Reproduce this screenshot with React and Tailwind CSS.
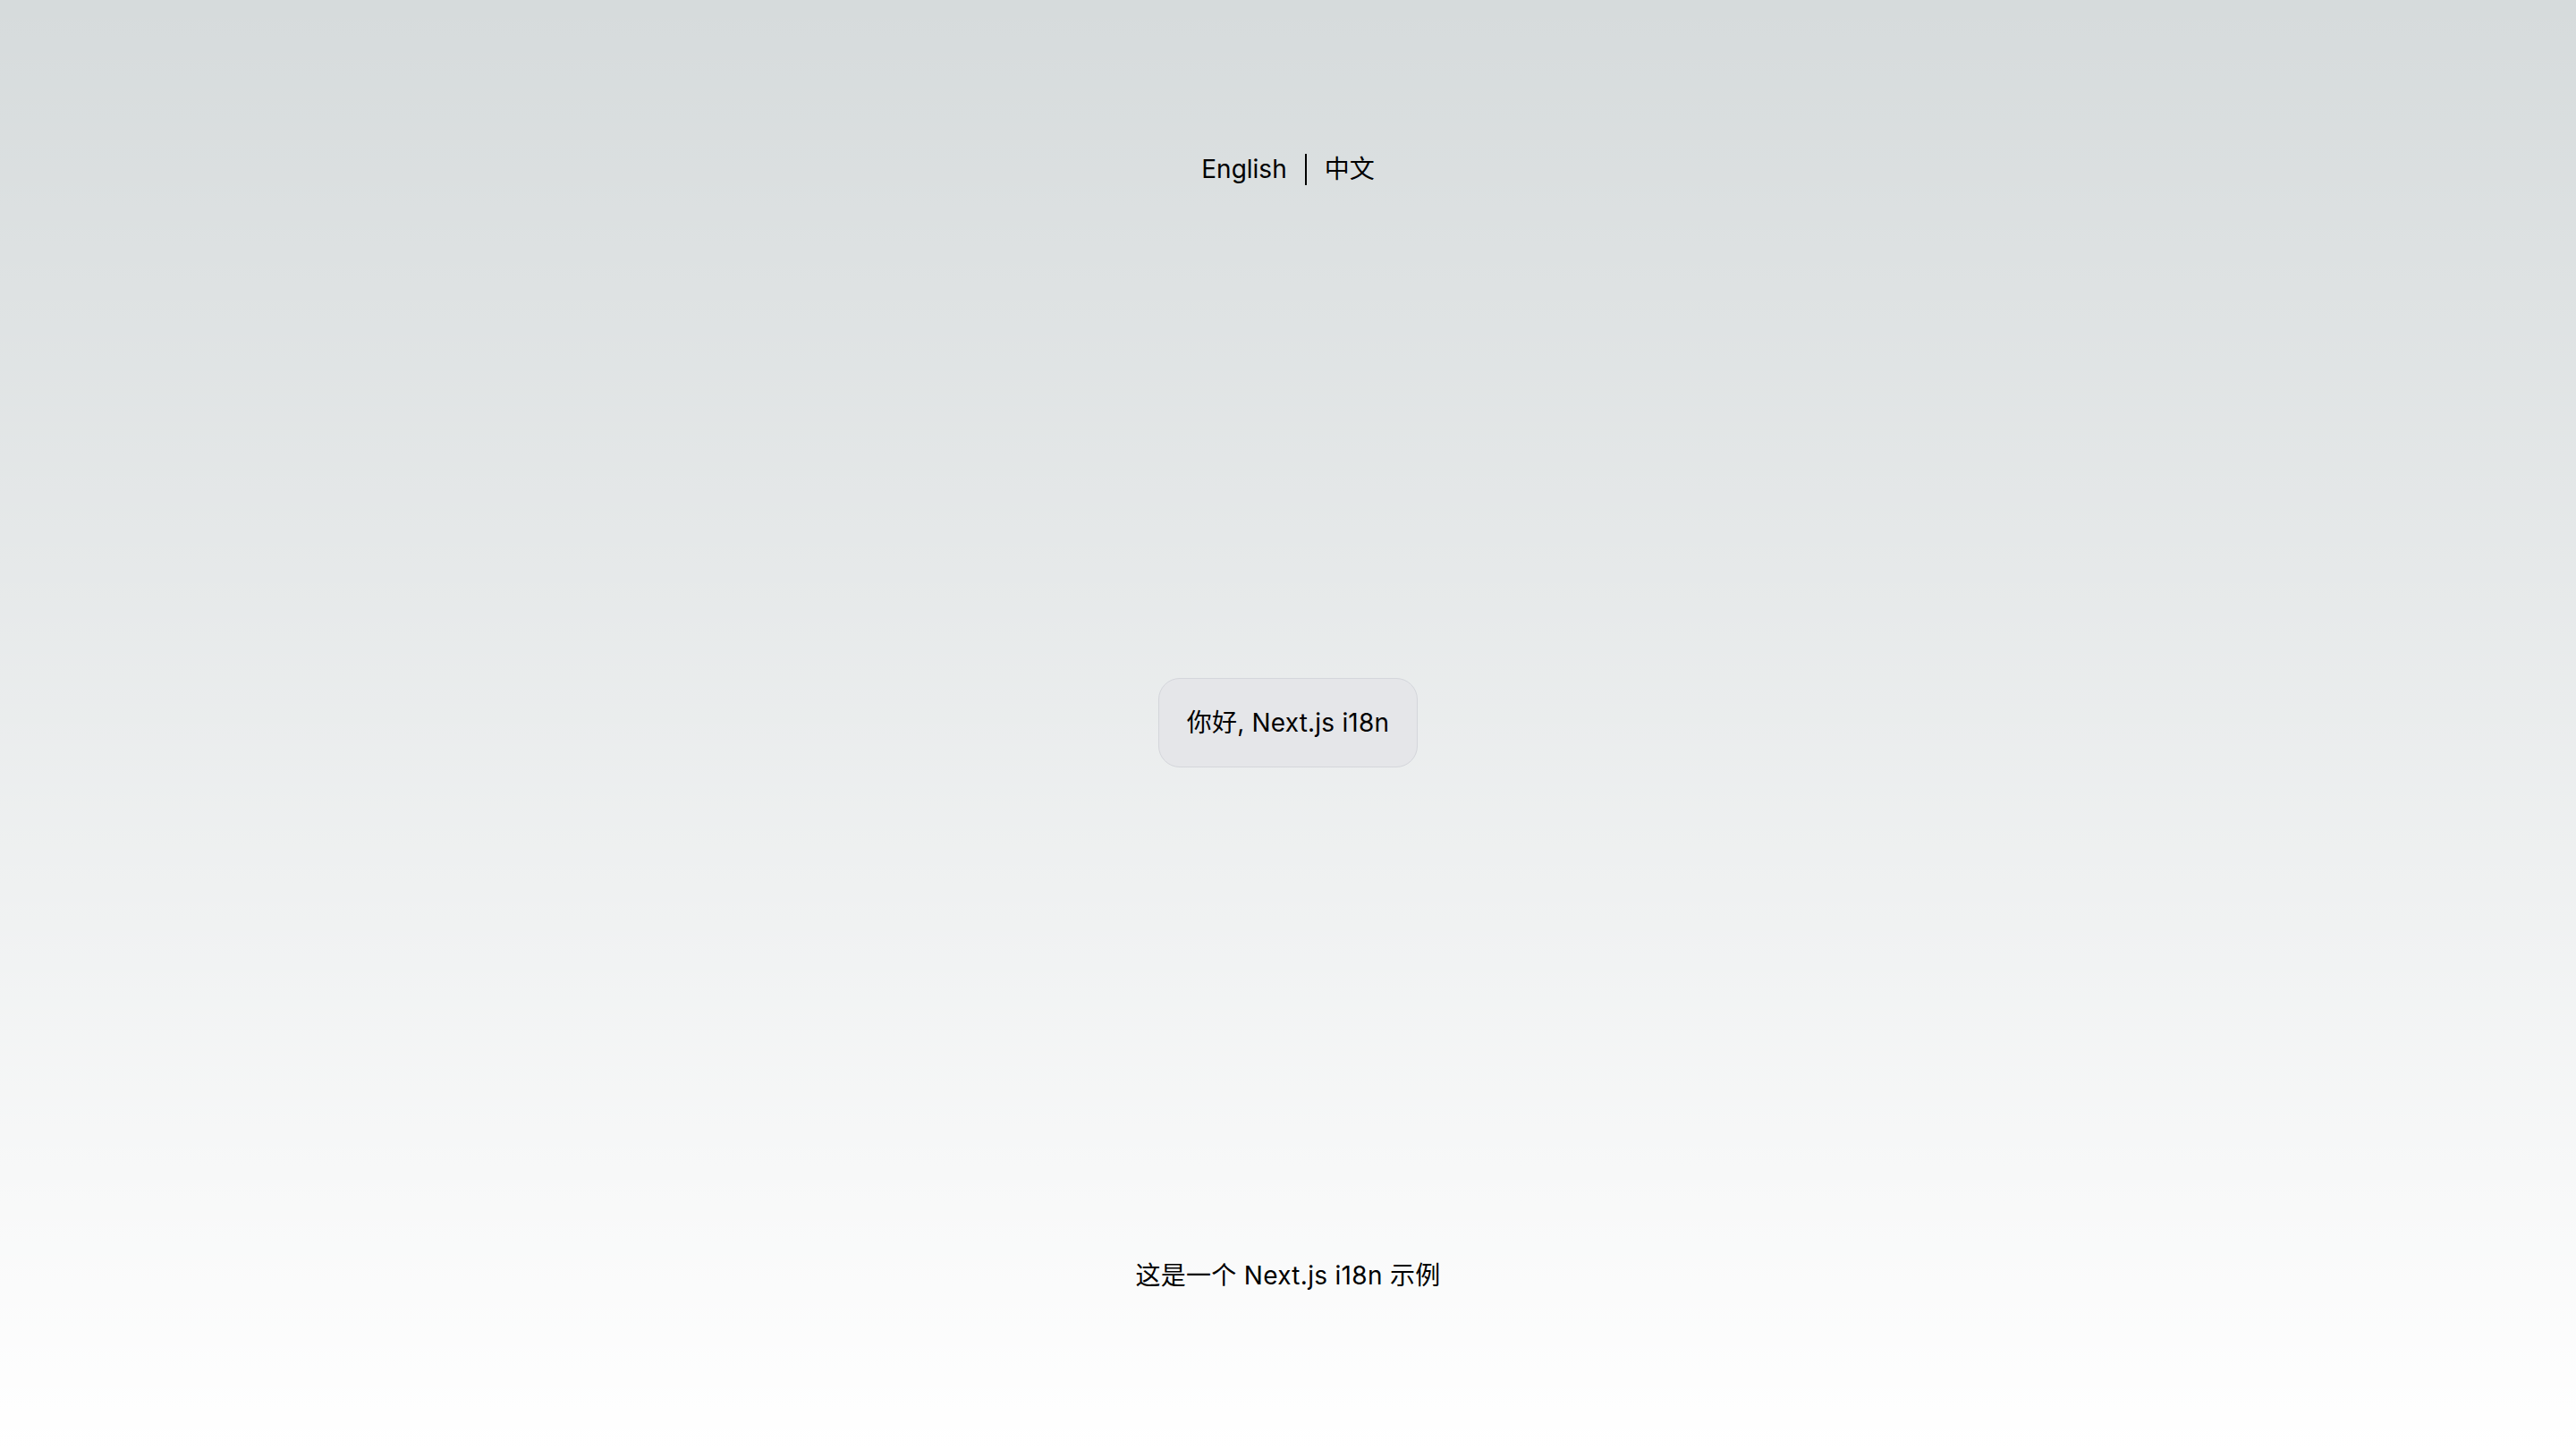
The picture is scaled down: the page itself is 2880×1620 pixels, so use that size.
// Next.js i18n demo landing page

const FONT = "font-['Inter','Noto_Sans_CJK_SC',sans-serif]";

function LocaleSwitcher() {
  return (
    <nav className="flex items-center text-[28px] leading-[40px] text-black">
      <a className="cursor-pointer">English</a>
      <span className="mx-[20px] h-[35px] w-[2px] bg-black" />
      <a className="cursor-pointer">中文</a>
    </nav>
  );
}

export default function App() {
  return (
    <main
      className={`${FONT} flex h-[1620px] w-full flex-col items-center justify-between bg-[rgb(214,219,220)] bg-linear-to-b from-transparent to-white pt-[169px] pb-[174px] text-black`}
    >
      <LocaleSwitcher />

      <div className="rounded-[24px] border border-[#d4d6db] bg-[#e5e6e9] px-[31px] py-[29px] text-[28px] leading-[40px] tracking-[0.2px]">
        你好, Next.js i18n
      </div>

      <p className="text-[28px] leading-[40px] tracking-[0.3px]">这是一个 Next.js i18n 示例</p>
    </main>
  );
}
